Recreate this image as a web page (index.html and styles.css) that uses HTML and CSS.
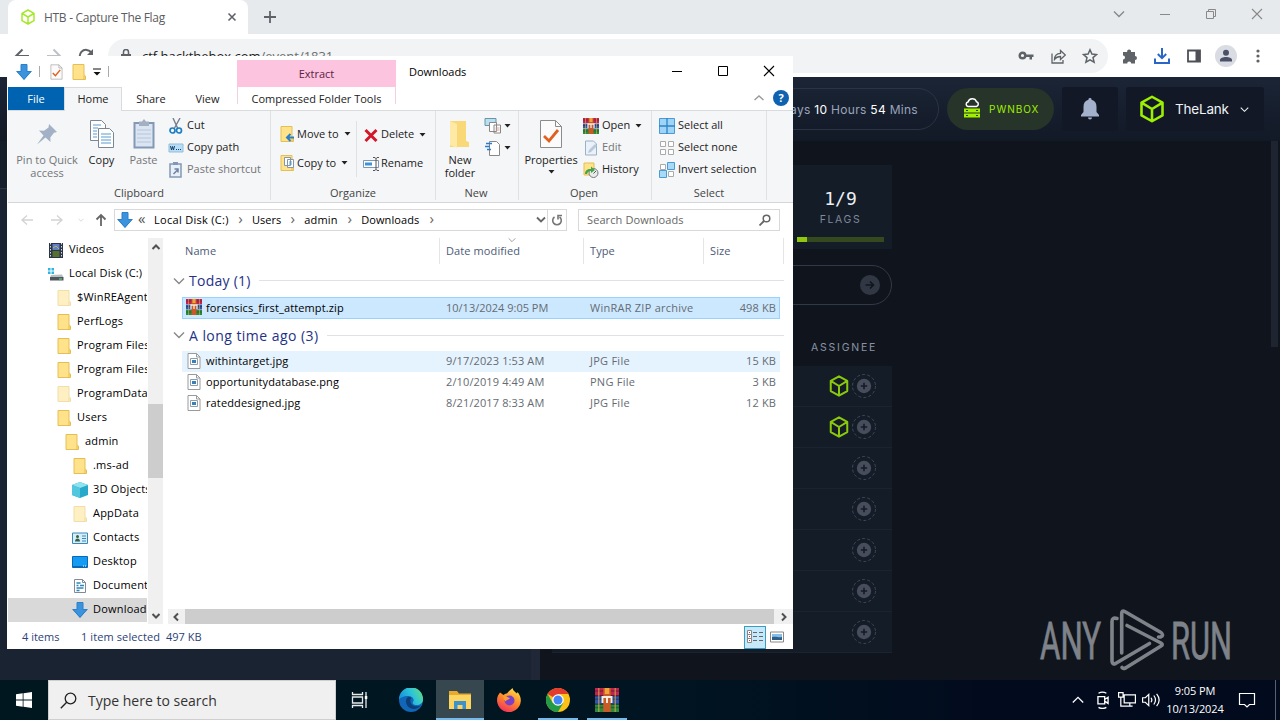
FILE: index.html
```html
<!DOCTYPE html>
<html lang="en">
<head>
  <meta charset="UTF-8" />
  <meta name="viewport" content="width=device-width, initial-scale=1.0"/>
  <title>HTB - Capture The Flag</title>
  <link rel="stylesheet" href="styles.css">
</head>
<body>

<!-- shared icons -->
<svg class="defs">
  <symbol id="cube" viewBox="0 0 24 24"><path d="M12 1.500 21 6.500v11L12 22.500 3 17.500v-11zM3 6.500l9 5.500 9-5.500M12 12v10" fill="none" stroke="currentColor" stroke-width="2.200" stroke-linejoin="round"/></symbol>
  <symbol id="down" viewBox="0 0 16 16"><path d="M5 0h6v7h5l-8 9-8-9h5z" fill="#3a93dc"/><path d="M5 .5h6v7h4L8 15.300 1 7.500h4z" fill="none" stroke="#2c7fc9"/></symbol>
  <symbol id="folder" viewBox="0 0 16 16"><path d="M2 .5h11V11l1.500 1v3.500H2z" fill="#ffe28a" stroke="#e5bf55"/><path d="M12 2v9l2 1v3h-2z" fill="#f3cf68"/></symbol>
  <symbol id="check" viewBox="0 0 24 30"><path d="M1.500 1.500h15l6 6v21h-21z" fill="#fbfbfb" stroke="#8c8c8c"/><path d="M16.500 1.500v6h6" fill="none" stroke="#8c8c8c"/><path d="m5 17 5 5 9-11" fill="none" stroke="#e2601f" stroke-width="2.800"/></symbol>
  <symbol id="rar" viewBox="0 0 16 16"><path fill="#c3224b" d="M0 0h16v5H0z"/><path fill="#3354a5" d="M0 5.500h16v5H0z"/><path fill="#2c8b3a" d="M0 11h16v5H0z"/><path d="M0 2h16M0 7.500h16M0 13h16" stroke="#222" stroke-opacity=".4"/><path d="M2.500 0v16M13.500 0v16" stroke="#d8b05c" stroke-opacity=".6"/><path fill="#c85a25" d="M5.500 0h5v16h-5z"/><path fill="#f0a43b" d="M6.500 0h3v4h-3z"/><path d="M5 10V6h6v4M8 6v4" fill="none" stroke="#f5ece0" stroke-width="1.300"/></symbol>
  <symbol id="pic" viewBox="0 0 14 16"><path d="M1 .5h8.500L13 4v11.500H1z" fill="#fff" stroke="#9a9a9a"/><path d="M9.500.5V4H13" fill="none" stroke="#9a9a9a"/><path d="M3.500 5.500h7v6h-7z" fill="#fff" stroke="#8aa0b0"/><path fill="#3c7fb5" d="M5 7h4v3H5z"/></symbol>
  <symbol id="caret" viewBox="0 0 7 4"><path d="M.5 0h6l-3 3.500z" fill="#222"/></symbol>
  <symbol id="chev" viewBox="0 0 12 12"><path d="m1 3.500 5 5 5-5" fill="none" stroke="currentColor" stroke-width="1.400"/></symbol>
  <symbol id="page" viewBox="0 0 16 16"><path d="M2.500 1.500h8l3 3v10h-11z" fill="#fff" stroke="#7f8c98"/><path d="M10.500 1.500v3h3" fill="none" stroke="#7f8c98"/></symbol>
  <symbol id="plus" viewBox="0 0 24 24"><circle cx="12" cy="12" r="11.500" fill="none" stroke="#454d5c" stroke-dasharray="3 2.200" stroke-width=".9"/><circle cx="12" cy="12" r="7.200" fill="#474d5b"/><path d="M12 8.800v6.400M8.800 12h6.400" stroke="#151b27" stroke-width="1.600"/></symbol>
</svg>

<div class="browser">
  <div class="tabstrip">
    <div class="tab">
      <svg class="fav"><use href="#cube"/></svg>
      <span>HTB - Capture The Flag</span>
      <svg class="tab-x" viewBox="0 0 10 10"><path d="m1.500 1.500 7 7m0-7-7 7" stroke="#5f6368" stroke-width="1.600"/></svg>
    </div>
    <svg class="newtab" viewBox="0 0 12 12"><path d="M6 0v12M0 6h12" stroke="#5f6368" stroke-width="1.800"/></svg>
    <div class="win-btns">
      <svg viewBox="0 0 12 12"><use href="#chev"/></svg>
      <svg viewBox="0 0 12 12"><path d="M1 6.500h10" stroke="#888"/></svg>
      <svg viewBox="0 0 12 12"><path d="M1.500 3.500h7v7h-7zM3.500 3.500v-2h7v7h-2" fill="none" stroke="#888"/></svg>
      <svg viewBox="0 0 12 12"><path d="m1 1 10 10m0-10L1 11" stroke="#888" stroke-width="1.100"/></svg>
    </div>
  </div>
  <div class="toolbar">
    <svg class="nav-ic" viewBox="0 0 16 16"><path d="M15 8H2m6.500-6.500L2 8l6.500 6.500" fill="none" stroke="#5f6368" stroke-width="2"/></svg>
    <svg class="nav-ic" viewBox="0 0 16 16"><path d="M1 8h13M7.500 1.500 14 8l-6.500 6.500" fill="none" stroke="#bdc1c6" stroke-width="2"/></svg>
    <svg class="nav-ic" viewBox="0 0 16 16"><path d="M13.500 5A6.300 6.300 0 1 0 14.300 9" fill="none" stroke="#5f6368" stroke-width="2"/><path d="M15 1v6H9z" fill="#5f6368"/></svg>
    <div class="omnibox">
      <svg class="lock" viewBox="0 0 10 14"><path fill="#5f6368" d="M0 5h10v8H0z"/><path d="M2.500 5V3a2.500 2.500 0 0 1 5 0v2" fill="none" stroke="#5f6368" stroke-width="1.500"/></svg>
      <span class="url">ctf.hackthebox.com<i>/event/1831</i></span>
      <svg class="ob-ic" viewBox="0 0 16 16"><circle cx="4.500" cy="7.500" r="2.800" fill="none" stroke="#5f6368" stroke-width="2.400"/><path d="M7 6.500h8.500V9H14v2.500h-2.500V9H7z" fill="#5f6368"/></svg>
      <svg class="ob-ic" viewBox="0 0 16 16"><path d="M2 5.500v9.500h11v-3M4.500 11.500c0-4 2.500-6 6-6.200V2.500L15.300 7l-4.800 4.500v-3c-2.500 0-4.500.8-6 3z" fill="none" stroke="#5f6368" stroke-width="1.300"/></svg>
      <svg class="ob-ic" viewBox="0 0 16 16"><path d="m8 1.800 1.900 4.300 4.600.4-3.500 3.100 1.100 4.600L8 11.800l-4.100 2.400L5 9.600 1.500 6.500l4.600-.4z" fill="none" stroke="#5f6368" stroke-width="1.500"/></svg>
    </div>
    <div class="ext">
      <svg viewBox="0 0 16 16"><path fill="#5f6368" d="M1 4h4.200a2 2 0 1 1 3.800 0h4v4a2 2 0 1 1 0 4v3.500H9.200a2 2 0 0 0-4 0H1v-4a2 2 0 0 0 0-4z"/></svg>
      <svg viewBox="0 0 16 16"><path d="M8 0v10M3.800 6 8 10.200 12.200 6M1 10.500V15h14v-4.500" fill="none" stroke="#2a66c8" stroke-width="2"/></svg>
      <svg viewBox="0 0 16 16"><path d="M2 2.500h12v11H2z" fill="none" stroke="#4d5156" stroke-width="1.800"/><path fill="#4d5156" d="M9.500 2H14v12H9.500z"/></svg>
      <svg class="face" viewBox="0 0 22 22"><circle cx="11" cy="11" r="11" fill="#dadce3"/><circle cx="11" cy="7.700" r="3" fill="#4a5068"/><path d="M5 16.500v-1.500c0-4 12-4 12 0v1.500z" fill="#4a5068"/></svg>
      <svg viewBox="0 0 16 16"><g fill="#5f6368"><circle cx="8" cy="3" r="1.600"/><circle cx="8" cy="8" r="1.600"/><circle cx="8" cy="13" r="1.600"/></g></svg>
    </div>
  </div>

  <div class="page">
    <header class="htb-head">
      <div class="timer">Days <b>10</b> Hours <b>54</b> Mins</div>
      <div class="pwnbox">
        <svg viewBox="0 0 18 20"><path d="M5 8.500h8.500a2.500 2.500 0 0 0 0-4.800 4.500 4.500 0 0 0-8.500.3 2.300 2.300 0 0 0 0 4.500z" fill="none" stroke="#fff" stroke-width="1.500"/><path d="M1 10.500h16v4H1zM1 15.500h16v4H1z" fill="#9fef00"/><path d="M3 12.500h2m8 0h2M3 17.500h2m8 0h2" stroke="#2b3a2d"/></svg>
        <span>PWNBOX</span>
      </div>
      <div class="bell"><svg viewBox="0 0 18 22"><path d="M9 0a1.500 1.500 0 0 1 1.500 1.700C14 2.500 15.500 5 15.500 9v5l2.500 3v1.500H0V17l2.500-3V9c0-4 1.500-6.500 5-7.300A1.500 1.500 0 0 1 9 0zM7 19.500h4a2 2 0 0 1-4 0z" fill="#a4b1cd"/></svg></div>
      <div class="user"><svg class="lg"><use href="#cube"/></svg><span>TheLank</span><svg class="sm"><use href="#chev"/></svg></div>
    </header>
    <div class="htb-body">
      <aside class="chat"><div class="chat-top"></div></aside>
      <section class="event">
        <div class="flags">
          <strong>1/9</strong>
          <small>FLAGS</small>
          <div class="progress"><div style="width:11%"></div></div>
        </div>
        <div class="flag-input"><svg viewBox="0 0 20 20"><circle cx="10" cy="10" r="10" fill="#313844"/><path d="M5.500 10h8M10 6.500l3.500 3.500-3.500 3.500" fill="none" stroke="#10151e" stroke-width="1.700"/></svg></div>
        <div class="assignee">ASSIGNEE</div>
        <div class="tasks">
          <div><svg class="own"><use href="#cube"/></svg><svg><use href="#plus"/></svg></div>
          <div><svg class="own"><use href="#cube"/></svg><svg><use href="#plus"/></svg></div>
          <div><svg><use href="#plus"/></svg></div>
          <div><svg><use href="#plus"/></svg></div>
          <div><svg><use href="#plus"/></svg></div>
          <div><svg><use href="#plus"/></svg></div>
          <div><svg><use href="#plus"/></svg></div>
        </div>
      </section>
      <div class="page-scroll"></div>
    </div>
  </div>
</div>

<svg class="watermark" viewBox="0 0 200 66">
  <text x="4" y="53" textLength="61" lengthAdjust="spacingAndGlyphs">ANY</text>
  <text x="135" y="53" textLength="61" lengthAdjust="spacingAndGlyphs">RUN</text>
  <g fill="none" stroke="#7e8289" stroke-width="3.600" stroke-linejoin="round" stroke-linecap="round">
    <path d="M85.700 47V7.500q0-3.500 3-2L125 26.500q3.500 3-.5 4.500h-2"/>
    <path d="M91 19.500 125 37q2.500 1.500 0 3L89.500 62q-2.500 1-3.500-.5"/>
    <path d="M81 12.500q-5-1.500-5 3V55q0 4 3.500 2.500l34-20"/>
  </g>
</svg>

<div class="explorer">
  <div class="titlebar">
    <div class="quick">
      <svg class="i16"><use href="#down"/></svg><i class="bar"></i>
      <svg class="q-doc"><use href="#check"/></svg>
      <svg class="i16 q-fold"><use href="#folder"/></svg>
      <svg class="q-car" viewBox="0 0 8 8"><path d="M0 1h8" stroke="#111"/><path d="M.5 4h7L4 7.500z" fill="#111"/></svg><i class="bar"></i>
    </div>
    <div class="extract">Extract</div>
    <div class="title">Downloads</div>
    <div class="sys">
      <svg viewBox="0 0 12 12"><path d="M1 6.500h10" stroke="#000"/></svg>
      <svg viewBox="0 0 12 12"><path d="M1.500 1.500h9v9h-9z" fill="none" stroke="#000"/></svg>
      <svg viewBox="0 0 12 12"><path d="m1 1 10 10m0-10L1 11" stroke="#000" stroke-width="1.100"/></svg>
    </div>
  </div>

  <div class="tabs">
    <div class="t-file">File</div>
    <div class="t-home">Home</div>
    <div class="t-share">Share</div>
    <div class="t-view">View</div>
    <div class="t-comp">Compressed Folder Tools</div>
    <svg class="up-car" viewBox="0 0 12 12"><path d="m1.500 8 4.500-4L10.500 8" fill="none" stroke="#999" stroke-width="1.400"/></svg>
    <div class="help">?</div>
  </div>

  <div class="ribbon">
    <div class="group g-clip">
      <div class="row">
        <div class="big dim pin"><svg viewBox="0 0 24 24"><path d="m14 2 8 8-3 .8-3.700 4.700.2 4.500-5-4.500L2 22.500 8.500 13.500 4 8.500l5 .3 4.500-3.300z" fill="#a3b1c6"/></svg><span>Pin to Quick<br>access</span></div>
        <div class="big copy"><svg viewBox="0 0 26 30"><g fill="#fff" stroke="#7b8894"><path d="M1.500 1.500h11l4 4v16h-15z"/><path d="M9.500 9.500h11l4 4v15h-15z"/></g><path d="M4 6h8M4 9h5M4 12h4M4 15h4M4 18h4M12 15h10M12 18h10M12 21h10M12 24h10" stroke="#5b9bd0" stroke-width="1.200"/></svg><span>Copy</span></div>
        <div class="big dim paste"><svg viewBox="0 0 22 30"><path d="M1.500 4h19v24.500h-19z" fill="#dbe5f2" stroke="#8298b5" stroke-width="2"/><path d="M6 2.500h3L11 0l2 2.500h3V7H6z" fill="#a3b0c2"/><path d="M4 11h14M4 15h14M4 19h14M4 23h14" stroke="#b4c5da"/></svg><span>Paste</span></div>
        <div class="smalls">
          <div><svg viewBox="0 0 16 16"><path d="m5 0 5 11M12 0 6 11" stroke="#75808c" stroke-width="1.400"/><g fill="none" stroke="#1c7ec4" stroke-width="1.700"><circle cx="4.500" cy="12.500" r="2.500"/><circle cx="11" cy="12.500" r="2.500"/></g></svg>Cut</div>
          <div><svg viewBox="0 0 16 16"><path d="M1 4h14v8H1z" fill="#b8def7" stroke="#8fbddb"/><path d="m2.500 6 1 4 1-3.500 1 3.500 1-4" fill="none" stroke="#174066" stroke-width="1"/><path d="M8 9.500h6" stroke="#174066" stroke-dasharray="1 1" stroke-width="1.200"/></svg>Copy path</div>
          <div class="dim"><svg viewBox="0 0 16 16"><path d="M2 2h11v13H2z" fill="#e8eff7" stroke="#8298b5" stroke-width="1.500"/><path d="M5 0h5v3H5z" fill="#8298b5"/><path d="M5.500 12 10 7.500M6.500 7H10v3.500" fill="none" stroke="#6c83a3" stroke-width="1.500"/></svg>Paste shortcut</div>
        </div>
      </div>
      <div class="label">Clipboard</div>
    </div>
    <div class="group g-org">
      <div class="row">
        <div class="mids">
          <div><svg viewBox="0 0 16 16"><use href="#folder"/><path d="M15 11.500H9M11.500 8 8 11.500l3.500 3.500" fill="none" stroke="#2d7dc8" stroke-width="2"/></svg>Move to<svg class="car"><use href="#caret"/></svg></div>
          <div><svg viewBox="0 0 16 16"><use href="#folder"/><path d="M5.500 2.500h6v8h-6zM8.500 4.500h6v8h-6z" fill="#fff" stroke="#8296ad"/><path d="M10 7h3M10 9h3" stroke="#5b9bd0"/></svg>Copy to<svg class="car"><use href="#caret"/></svg></div>
        </div>
        <div class="mids second">
          <div><svg viewBox="0 0 16 16"><path d="m2.500 3 11 11m0-11-11 11" stroke="#d3172a" stroke-width="3"/></svg>Delete<svg class="car"><use href="#caret"/></svg></div>
          <div><svg viewBox="0 0 16 16"><path d="M.5 4.500h15v7H.5z" fill="#fff" stroke="#7d98b3"/><path fill="#3e92d8" d="M2 6.500h7v3H2z"/><path d="M10 1.500h2l1 1 1-1h2M13 2v12m-3 .5h2l1-1 1 1h2" fill="none" stroke="#555"/></svg>Rename</div>
        </div>
      </div>
      <div class="label">Organize</div>
    </div>
    <div class="group g-new">
      <div class="row">
        <div class="big newf"><svg viewBox="0 0 24 30"><path d="M2 2h16v20l3 1v5H2z" fill="#f8d877"/><path d="M2 2l7 3v24l-7-3z" fill="#ffe9a6"/></svg><span>New<br>folder</span></div>
        <div class="pair">
          <div><svg viewBox="0 0 18 18"><path d="M1 1.500h11v7H1z" fill="#b9e0f0" stroke="#6a94a8"/><path d="M5.500 5.500h7v9h-7zM10 8h6.500v8H10z" fill="#fff" stroke="#888"/><path d="M11.500 11h4M11.500 13h4" stroke="#d0a090"/></svg><svg class="car"><use href="#caret"/></svg></div>
          <div><svg viewBox="0 0 18 18"><path d="M5.500 2.500h7l3 3v11h-10z" fill="#fff" stroke="#888"/><path d="M2 4.500h6M1 7.500h5M3 10.500h4" stroke="#2d7dc8" stroke-width="1.300"/></svg><svg class="car"><use href="#caret"/></svg></div>
        </div>
      </div>
      <div class="label">New</div>
    </div>
    <div class="group g-open">
      <div class="row">
        <div class="big props"><svg><use href="#check"/></svg><span>Properties</span><svg class="car"><use href="#caret"/></svg></div>
        <div class="smalls">
          <div><svg><use href="#rar"/></svg>Open<svg class="car"><use href="#caret"/></svg></div>
          <div class="dim"><svg viewBox="0 0 16 16"><path d="M2.500 1h8l3 3v11h-11z" fill="#eaf1f8" stroke="#9cb0c8"/><path d="m5 13 1-3 6-6 2 2-6 6z" fill="#b9c8da"/></svg>Edit</div>
          <div><svg viewBox="0 0 16 16"><path d="M1 1h10v12H1z" fill="#ffe28a" stroke="#e5bf55"/><circle cx="10.500" cy="11" r="4.500" fill="#e8eceb" stroke="#777"/><path d="M2 12c0-4 3-5.500 6-5V4.500L12 8l-4 3V9c-2 0-3.500 1-4 3z" fill="#42a547"/><path d="M10.500 11.500 13 9" stroke="#555"/></svg>History</div>
        </div>
      </div>
      <div class="label">Open</div>
    </div>
    <div class="group g-sel">
      <div class="row">
        <div class="smalls">
          <div><svg viewBox="0 0 16 16"><path d="M.5.5h15v15H.5z" fill="#9fd4f7" stroke="#4a9bd4"/><path d="M8 0v16M0 8h16" stroke="#2c84c8" stroke-width="1.300"/></svg>Select all</div>
          <div><svg viewBox="0 0 16 16"><path d="M1.500 1.500h5v5h-5zM9.500 1.500h5v5h-5zM1.500 9.500h5v5h-5zM9.500 9.500h5v5h-5z" fill="#fff" stroke="#aaa"/></svg>Select none</div>
          <div><svg viewBox="0 0 16 16"><path d="M1.500 2.500h5v5h-5zM9.500 9.500h5v5h-5z" fill="#fff" stroke="#aaa"/><path d="M8.500.5h7v7h-7zM.5 8.500h7v7h-7z" fill="#a8daf8" stroke="#4a9bd4"/></svg>Invert selection</div>
        </div>
      </div>
      <div class="label">Select</div>
    </div>
  </div>

  <div class="address">
    <svg class="a1" viewBox="0 0 14 14"><path d="M13 7H2m5-4.500L2 7l5 4.500" fill="none" stroke="#d3d3d3" stroke-width="1.300"/></svg>
    <svg class="a2" viewBox="0 0 14 14"><path d="M1 7h11M7 2.500 12 7l-5 4.500" fill="none" stroke="#d3d3d3" stroke-width="1.300"/></svg>
    <svg class="a3" viewBox="0 0 12 12"><use href="#chev"/></svg>
    <svg class="a4" viewBox="0 0 14 14"><path d="M7 13V2M2.500 6.500 7 2l4.500 4.500" fill="none" stroke="#666" stroke-width="1.800"/></svg>
    <div class="path">
      <svg class="i16"><use href="#down"/></svg>
      <span class="laq">«</span>
      <span class="c1">Local Disk (C:)</span><em>›</em><span>Users</span><em>›</em><span class="c3">admin</span><em>›</em><span class="c4">Downloads</span><em>›</em>
      <svg class="drop" viewBox="0 0 12 12"><path d="m2 3.500 4 4 4-4" fill="none" stroke="#666" stroke-width="1.800"/></svg>
      <div class="refresh"><svg viewBox="0 0 12 12"><path d="M3.500 3A4.300 4.300 0 1 0 8.500 3" fill="none" stroke="#777" stroke-width="1.600"/><path d="M7 5.500V1.500h4" fill="none" stroke="#777" stroke-width="1.600"/></svg></div>
    </div>
    <div class="search"><span>Search Downloads</span><svg viewBox="0 0 12 12"><circle cx="7.500" cy="4.500" r="3.300" fill="none" stroke="#666" stroke-width="1.500"/><path d="M5 7 .5 11.500" stroke="#666" stroke-width="1.800"/></svg></div>
  </div>

  <div class="main">
    <nav class="tree">
      <div class="l1"><svg viewBox="0 0 16 16"><path fill="#2a3648" d="M1 1h14v15H1z"/><path d="M2.500 1v15M13.500 1v15" stroke="#d5dbe2" stroke-dasharray="1.500 1.500"/><path fill="#5f7fc9" d="M4.500 2h7v6h-7z"/><path fill="#55702f" d="M4.500 9h7v6h-7z"/><path d="m5 6 3-2 3 3" stroke="#c2b05f" fill="none"/></svg>Videos</div>
      <div class="l1"><svg viewBox="0 0 16 16"><path d="M0 2h2.500v2.500H0zM3.500 2H6v2.500H3.500zM0 5.500h2.500V8H0zM3.500 5.500H6V8H3.500z" fill="#2bb5e0"/><path d="m3 9 11-.5 1.500 3H2z" fill="#b7bdc2"/><path fill="#4d575e" d="M2 11h13.500v3.500H2z"/><path d="M11 13h3" stroke="#6fe08a"/></svg>Local Disk (C:)</div>
      <div class="l2"><svg class="pale"><use href="#folder"/></svg>$WinREAgent</div>
      <div class="l2"><svg><use href="#folder"/></svg>PerfLogs</div>
      <div class="l2"><svg><use href="#folder"/></svg>Program Files</div>
      <div class="l2"><svg><use href="#folder"/></svg>Program Files</div>
      <div class="l2"><svg class="pale"><use href="#folder"/></svg>ProgramData</div>
      <div class="l2"><svg><use href="#folder"/></svg>Users</div>
      <div class="l3"><svg><use href="#folder"/></svg>admin</div>
      <div class="l4"><svg><use href="#folder"/></svg>.ms-ad</div>
      <div class="l4"><svg viewBox="0 0 16 16"><path d="m8 0 8 3v10l-8 3-8-3V3z" fill="#27a9c9"/><path d="m0 3 8-3 8 3-8 3z" fill="#8fe2f0"/><path d="M8 6v10l-8-3V3z" fill="#52c7de"/></svg>3D Objects</div>
      <div class="l4"><svg class="pale"><use href="#folder"/></svg>AppData</div>
      <div class="l4"><svg viewBox="0 0 16 16"><path d="M.5 3h15v10.500H.5z" fill="#d4effb" stroke="#3e86b4"/><circle cx="5.500" cy="6.500" r="1.500" fill="#3a5f40"/><path fill="#3a5f40" d="M3 11.500c0-4 5-4 5 0z"/><path d="M10 6h4M10 8.500h4M10 11h4" stroke="#3e86b4"/></svg>Contacts</div>
      <div class="l4"><svg viewBox="0 0 16 16"><path d="M.5 2.500h15v11H.5z" fill="#169bf4" stroke="#0a69b4"/><path d="M1 12.500h14" stroke="#0a69b4"/><path d="M11 12h3" stroke="#fff" stroke-dasharray="1 1"/></svg>Desktop</div>
      <div class="l4"><svg viewBox="0 0 16 16"><use href="#page"/><path d="M4.500 5h4M4.500 7.500h2M8 7.500h4M4.500 10h7M4.500 12.500h3" stroke="#2d86b8" stroke-width="1.300"/></svg>Documents</div>
      <div class="l4 sel"><svg><use href="#down"/></svg>Downloads</div>
    </nav>
    <div class="vscroll">
      <svg viewBox="0 0 12 12"><path d="m2.500 8 3.500-3.500L9.500 8" fill="none" stroke="#505050" stroke-width="2"/></svg>
      <div class="vthumb"></div>
      <svg class="dn" viewBox="0 0 12 12"><path d="M2.500 4 6 7.500 9.500 4" fill="none" stroke="#505050" stroke-width="2"/></svg>
    </div>
    <div class="files">
      <div class="cols">
        <div class="name">Name</div>
        <div class="date">Date modified<svg><use href="#chev"/></svg></div>
        <div class="type">Type</div>
        <div class="size">Size</div>
      </div>
      <div class="ghead first"><svg><use href="#chev"/></svg><span>Today (1)</span><hr></div>
      <div class="file selected"><svg><use href="#rar"/></svg><span class="name">forensics_first_attempt.zip</span><span class="date">10/13/2024 9:05 PM</span><span class="type">WinRAR ZIP archive</span><span class="size">498 KB</span></div>
      <div class="ghead long"><svg><use href="#chev"/></svg><span>A long time ago (3)</span><hr></div>
      <div class="file hover"><svg><use href="#pic"/></svg><span class="name">withintarget.jpg</span><span class="date">9/17/2023 1:53 AM</span><span class="type">JPG File</span><span class="size">15 KB</span></div>
      <div class="file"><svg><use href="#pic"/></svg><span class="name">opportunitydatabase.png</span><span class="date">2/10/2019 4:49 AM</span><span class="type">PNG File</span><span class="size">3 KB</span></div>
      <div class="file"><svg><use href="#pic"/></svg><span class="name">rateddesigned.jpg</span><span class="date">8/21/2017 8:33 AM</span><span class="type">JPG File</span><span class="size">12 KB</span></div>
      <div class="hscroll">
        <svg viewBox="0 0 12 12"><path d="M8 2.500 4.500 6 8 9.500" fill="none" stroke="#505050" stroke-width="2"/></svg>
        <div class="hthumb"></div>
        <svg viewBox="0 0 12 12"><path d="M4 2.500 7.500 6 4 9.500" fill="none" stroke="#505050" stroke-width="2"/></svg>
      </div>
    </div>
  </div>

  <div class="status">
    <span class="s1">4 items</span><span class="s2">1 item selected</span><span class="s3">497 KB</span>
    <div class="view on"><svg viewBox="0 0 18 16"><path d="M1.500 1.500h4v4h-4zM1.500 5.500h4v4h-4zM1.500 9.500h4v4h-4z" fill="#fff" stroke="#888"/><path d="M3 3.500h1M3 7.500h1M3 11.500h1" stroke="#c33"/><path d="M7 3.500h4m2 0h4M7 7.500h4m2 0h4M7 11.500h4m2 0h4" stroke="#666"/></svg></div>
    <div class="view"><svg viewBox="0 0 14 12"><path d="M.5 1h13v10H.5z" fill="#fff" stroke="#888"/><path fill="#85bfe8" d="M2 3h10v6H2z"/><path d="m2 9 0-3c5-1 6 1 10 0v3z" fill="#2d5f88"/></svg></div>
  </div>
</div>

<div class="taskbar">
  <div class="start"><svg viewBox="0 0 16 16"><path d="m0 2.300 6.700-1v6.300H0zM7.500 1.200 16 0v7.600H7.500zM0 8.400h6.700v6.300l-6.700-1zM7.500 8.400H16V16l-8.500-1.200z" fill="#fff"/></svg></div>
  <div class="tsearch"><svg viewBox="0 0 17 17"><circle cx="10.500" cy="6.500" r="5.300" fill="none" stroke="#222" stroke-width="1.300"/><path d="M6.700 10.300.8 16.300" stroke="#222" stroke-width="1.400"/></svg><span>Type here to search</span></div>
  <div class="app view-ic"><svg viewBox="0 0 18 18"><path d="M1.500 1v2.500h10V1M1.500 17v-2.500h10V17M1.500 6h10v6h-10zM15 1v16" fill="none" stroke="#e6eaec" stroke-width="1.300"/><path fill="#fff" d="M13.800 5h2.500v3h-2.500z"/></svg></div>
  <div class="app edge"><svg viewBox="0 0 24 24">
    <defs><linearGradient id="eg" x1="0" x2="1" y1=".4" y2="0"><stop offset="0" stop-color="#1695dd"/><stop offset=".5" stop-color="#2fc5d8"/><stop offset="1" stop-color="#6bdf6c"/></linearGradient></defs>
    <circle cx="12" cy="12" r="12" fill="#1166b8"/><path d="M0 11.500A12 12 0 0 1 24 11c.3 4-3 6-6 6-3.500 0-5-1.500-4-3 2-3-1-6-5-6-4.500 0-8 2-9 3.500z" fill="url(#eg)"/><path d="M9 9c-4 3-2 11 5 12 3 .3 6-1 8-3.500-3 1.500-9 1.500-10.500-3.500-.5-2 0-3 1-4-1-1-2.500-1.300-3.500-1z" fill="#0c3f78"/></svg></div>
  <div class="app active"><svg viewBox="0 0 24 24"><path fill="#e8a92c" d="M1 3h8l2 2.500h12V9H1z"/><path fill="#fcd462" d="M1 7h22v14H1z"/><path d="M6 21v-8h12v8h-3.500v-4h-5v4z" fill="#3c92cc"/></svg></div>
  <div class="app"><svg viewBox="0 0 24 24">
    <defs><linearGradient id="fg" x1=".8" x2=".3" y1="0" y2="1"><stop offset="0" stop-color="#ffe34a"/><stop offset=".5" stop-color="#ff8a2a"/><stop offset="1" stop-color="#f0305c"/></linearGradient></defs>
    <path d="M3 4.500 6.500 7C8 5.500 9 5.500 10 5.500 11.500 3 14 2 15.500 0c.5 3 3 4 4.500 5.500l.5-1.500C23 7 24 10 23.800 13A11.900 11.900 0 1 1 1 7.500z" fill="url(#fg)"/><circle cx="12.500" cy="12.500" r="5" fill="#7c40c8"/><path d="M6.500 8c3 0 4 1.500 6.500 2-1 2-4 1.500-4 3.500-2-1-3-3-2.500-5.500z" fill="#ff9e2e"/></svg></div>
  <div class="app run"><svg viewBox="0 0 24 24"><circle cx="12" cy="12" r="12" fill="#fbc116"/><path d="M12 12 1.600 6A12 12 0 0 1 22.400 6H12z" fill="#e33b2e"/><path d="M1.600 6A12 12 0 0 0 12 24l5.200-9L12 12 6.800 15z" fill="#229a47"/><circle cx="12" cy="12" r="5.800" fill="#fff"/><circle cx="12" cy="12" r="4.500" fill="#4285f4"/></svg></div>
  <div class="app run"><svg><use href="#rar"/></svg></div>
  <div class="tray">
    <svg class="t1" viewBox="0 0 12 12"><path d="M.8 8.500 6 3.300l5.200 5.200" fill="none" stroke="#fff" stroke-width="1.300"/></svg>
    <svg viewBox="0 0 16 16"><path d="M3.500 5h6v6.500h-6zM9.500 7.500l3-2v5.500l-3-2M4 2q3.500-2 7 0M4 14.500q3.500 2 7 0" fill="none" stroke="#fff" stroke-width="1.200"/></svg>
    <svg viewBox="0 0 16 16"><path d="M5.500 3.500h10v7h-10zM7 13.500h6M10.500 10.500v3M2.500 6v7.500H7M.5 1.500h4v4h-4z" fill="none" stroke="#fff" stroke-width="1.100"/></svg>
    <svg viewBox="0 0 16 16"><path d="M.5 6v4h2.500L6 13V3L3 6zM8 6q1.500 2 0 4M10.500 4q3 4 0 8M13 2.500q4.500 5.500 0 11" fill="none" stroke="#fff" stroke-width="1.100"/></svg>
    <div class="clock">9:05 PM<br>10/13/2024</div>
    <svg class="note" viewBox="0 0 18 18"><path d="M1.500 2.500h15v11h-5l-2.500 2.500-2.500-2.500h-5z" fill="none" stroke="#fff" stroke-width="1.200"/></svg>
    <i></i>
  </div>
</div>

</body>
</html>
```

FILE: styles.css
```css
:root {
  --green: #9fef00;
  --page-bg: #10151d;
  --panel: #141c28;
  --navy: #1a2332;
}

* {
  margin: 0;
  padding: 0;
  box-sizing: border-box;
}

body {
  width: 1280px;
  height: 720px;
  overflow: hidden;
  position: relative;
  font-family: 'Open Sans', 'Noto Sans', sans-serif;
  font-size: 11px;
  color: #222;
  background: var(--page-bg);
}

svg {
  display: block;
  flex-shrink: 0;
}

i {
  font-style: normal;
}

.defs {
  position: absolute;
  width: 0;
  height: 0;
}

.i16 {
  width: 16px;
  height: 16px;
}

.car {
  width: 7px !important;
  height: 4px !important;
}

/* browser */
.browser {
  height: 680px;
  display: flex;
  flex-direction: column;
}

.tabstrip {
  height: 34px;
  background: #e7eaed;
  display: flex;
  align-items: center;
  padding-left: 8px;
}

.tab {
  width: 240px;
  height: 34px;
  background: #fff;
  border-radius: 8px 8px 0 0;
  display: flex;
  align-items: center;
  padding: 0 11px 0 12px;
  font-size: 12px;
  letter-spacing: -0.3px;
  color: #5a5d61;
}

.fav {
  width: 16px;
  height: 16px;
  color: #a4e82a;
  margin-right: 8px;
}

.tab-x {
  width: 10px;
  height: 10px;
  margin-left: auto;
}

.newtab {
  width: 12px;
  height: 12px;
  margin-left: 16px;
}

.win-btns {
  margin-left: auto;
  display: flex;
  gap: 34px;
  padding: 0 17px 6px 0;
  color: #888;
}

.win-btns svg {
  width: 12px;
  height: 12px;
}

.toolbar {
  height: 43px;
  background: #fff;
  display: flex;
  align-items: center;
  padding-left: 14px;
}

.nav-ic {
  width: 16px;
  height: 16px;
  margin-right: 16px;
}

.nav-ic:nth-child(3) {
  margin-right: 14px;
}

.omnibox {
  width: 1000px;
  height: 34px;
  border-radius: 17px;
  background: #f1f3f4;
  display: flex;
  align-items: center;
  padding: 0 10px 0 13px;
}

.lock {
  width: 10px;
  height: 14px;
}

.url {
  margin: 0 auto 0 11px;
  font-size: 13px;
  line-height: 18px;
  letter-spacing: -0.02px;
  color: #222;
}

.url i {
  color: #6a6d70;
}

.ob-ic {
  width: 16px;
  height: 16px;
  margin-left: 16px;
}

.ext {
  display: flex;
  align-items: center;
  gap: 16px;
  margin-left: 14px;
}

.ext svg {
  width: 16px;
  height: 16px;
}

.ext .face {
  width: 22px;
  height: 22px;
  margin: 0 -3px;
}

.page {
  flex: 1;
  display: flex;
  flex-direction: column;
}

.htb-head {
  height: 64px;
  background: linear-gradient(#1b2535, #121927);
  display: flex;
  align-items: center;
  justify-content: flex-end;
  padding-right: 16px;
  gap: 8px;
}

.timer {
  width: 240px;
  height: 42px;
  border: 1px solid #2b3444;
  border-radius: 21px;
  display: flex;
  align-items: center;
  justify-content: flex-end;
  padding-right: 20px;
  font: 12px 'Inter', sans-serif;
  letter-spacing: 0.3px;
  white-space: pre;
  color: #99a4ba;
}

.timer b {
  font-weight: 400;
  color: #fff;
}

.pwnbox {
  width: 107px;
  height: 42px;
  border-radius: 21px;
  background: #26342a;
  display: flex;
  align-items: center;
  padding-left: 16px;
  gap: 8px;
  font: 10px 'Inter', sans-serif;
  letter-spacing: 1px;
  color: var(--green);
}

.pwnbox svg {
  width: 18px;
  height: 20px;
  margin-top: -3px;
}

.bell,
.user {
  height: 44px;
  background: #121825;
  border-radius: 3px;
  display: flex;
  align-items: center;
}

.bell {
  width: 56px;
  justify-content: center;
}

.bell svg {
  width: 18px;
  height: 22px;
}

.user {
  width: 138px;
  padding-left: 12px;
  font: 13.5px 'Inter', sans-serif;
  letter-spacing: -0.2px;
  color: #f0f2f6;
}

.user .lg {
  width: 28px;
  height: 28px;
  color: var(--green);
  margin-right: 9px;
}

.user .sm {
  width: 9px;
  height: 9px;
  margin-left: 11px;
}

.htb-body {
  flex: 1;
  display: flex;
}

.chat {
  width: 540px;
  background: var(--navy);
  border-right: 9px solid #202838;
}

.chat-top {
  height: 48px;
  background: #151e2b;
  border-bottom: 1px solid #2b3545;
}

.event {
  width: 352px;
  padding-top: 24px;
  display: flex;
  flex-direction: column;
  align-items: flex-end;
}

.flags {
  width: 103px;
  height: 84px;
  background: var(--panel);
  display: flex;
  flex-direction: column;
  align-items: center;
  padding-top: 22px;
}

.flags strong {
  font: 18px/24px 'DejaVu Sans Mono', monospace;
  color: #eceff4;
}

.flags small {
  font: 10.5px/18px 'Inter', sans-serif;
  letter-spacing: 1.6px;
  color: #7f899b;
}

.progress {
  width: 87px;
  height: 5px;
  margin-top: 8px;
  background: #344a1e;
}

.progress div {
  height: 5px;
  background: #8fc80e;
}

.flag-input {
  width: 300px;
  height: 40px;
  margin-top: 16px;
  border: 1px solid #323946;
  border-radius: 20px;
  display: flex;
  align-items: center;
  justify-content: flex-end;
  padding-right: 11px;
}

.flag-input svg {
  width: 20px;
  height: 20px;
}

.assignee {
  height: 61px;
  padding: 35px 15px 0 0;
  font: 10.5px/16px 'Inter', sans-serif;
  letter-spacing: 1.75px;
  color: #8993a5;
}

.tasks {
  width: 340px;
  background: var(--panel);
}

.tasks > div {
  height: 41px;
  border-bottom: 1px solid #1b2330;
  display: flex;
  align-items: center;
  justify-content: flex-end;
  padding-right: 16px;
}

.tasks svg {
  width: 24px;
  height: 24px;
}

.tasks .own {
  width: 22px;
  height: 22px;
  color: #8ac90c;
  margin-right: 2px;
}

.page-scroll {
  width: 7px;
  height: 206px;
  margin: 0 2px 0 auto;
  background: #1e2530;
}

.watermark {
  position: absolute;
  left: 1036px;
  top: 606px;
  width: 200px;
  height: 66px;
}

.watermark text {
  font: 400 52px Roboto, sans-serif;
  fill: #7e8289;
  stroke: #7e8289;
  stroke-width: 0.8;
}

/* file explorer window */
.explorer {
  position: absolute;
  left: 7px;
  top: 56px;
  width: 786px;
  height: 593px;
  padding-left: 1px;
  background: #fff;
  display: flex;
  flex-direction: column;
}

.titlebar {
  height: 31px;
  display: flex;
}

.quick {
  width: 229px;
  padding-left: 8px;
  display: flex;
  align-items: center;
}

.bar {
  width: 1px;
  height: 11px;
  background: #aaa;
  margin: 0 10px 0 7px;
}

.q-doc {
  width: 13px;
  height: 16px;
  margin-right: 8px;
}

.q-fold {
  margin-right: 6px;
}

.q-car {
  width: 8px;
  height: 8px;
}

.extract {
  width: 159px;
  height: 27px;
  margin-top: 4px;
  background: #fcc4de;
  color: #5b2343;
  text-align: center;
  line-height: 28px;
}

.title {
  padding-left: 13px;
  line-height: 31px;
  color: #000;
}

.sys {
  margin-left: auto;
  padding: 0 18px 1px 0;
  display: flex;
  align-items: center;
  gap: 34px;
}

.sys svg {
  width: 12px;
  height: 12px;
}

.tabs {
  height: 23px;
  display: flex;
  line-height: 24px;
  text-align: center;
}

.t-file {
  width: 56px;
  background: #0063b1;
  color: #fff;
}

.t-home {
  width: 58px;
  height: 24px;
  background: #f5f6f7;
  border: 1px solid #dadbdc;
  border-bottom: none;
  line-height: 22px;
  position: relative;
}

.t-share {
  width: 58px;
}

.t-view {
  width: 57px;
  padding-right: 2px;
}

.t-comp {
  width: 159px;
  height: 17px;
  border: solid #f3cfe0;
  border-width: 0 1px;
}

.up-car {
  width: 12px;
  height: 12px;
  margin: 5px 8px 0 auto;
}

.help {
  width: 16px;
  height: 16px;
  margin: 3px 4px 0 0;
  border-radius: 50%;
  background: #0f62b0;
  color: #fff;
  font-weight: bold;
  line-height: 16px;
}

.ribbon {
  height: 93px;
  background: #f5f6f7;
  border-top: 1px solid #dadbdc;
  border-bottom: 1px solid #d5d6d7;
  display: flex;
}

.group {
  margin-bottom: 2px;
  border-right: 1px solid #e0e1e2;
  display: flex;
  flex-direction: column;
}

.g-clip { width: 263px; }
.g-org { width: 165px; }
.g-new { width: 83px; }
.g-open { width: 133px; }
.g-sel { width: 115px; }

.row {
  height: 75px;
  display: flex;
}

.label {
  text-align: center;
  line-height: 15px;
  color: #444;
}

.g-new .label,
.g-open .label {
  padding-right: 2px;
}

.big {
  display: flex;
  flex-direction: column;
  align-items: center;
  padding-top: 8px;
  text-align: center;
  line-height: 13px;
  white-space: nowrap;
}

.big svg {
  height: 30px;
  margin-bottom: 4px;
}

.dim {
  color: #737578;
}

.pin { width: 78px; }
.pin svg { width: 24px; height: 24px; margin: 3px 0 7px; }
.copy { width: 31px; }
.copy svg { width: 26px; }
.paste { width: 53px; }
.paste svg { width: 22px; }

.smalls {
  padding-top: 4px;
}

.smalls > div {
  height: 22px;
  display: flex;
  line-height: 20px;
  white-space: nowrap;
}

.smalls svg {
  width: 16px;
  height: 16px;
  margin: 3px 3px 0 0;
}

.smalls .car {
  margin: 9px 0 0 5px;
}

.g-clip .smalls {
  margin-left: -2px;
}

.mids {
  width: 86px;
  padding: 9px 0 0 8px;
}

.mids.second {
  width: 78px;
  height: 56px;
  margin-top: 10px;
  margin-left: -1px;
  padding: 0 0 0 6px;
  border-left: 1px solid #e0e1e2;
}

.mids > div {
  height: 29px;
  display: flex;
  line-height: 27px;
  white-space: nowrap;
}

.mids.second > div {
  line-height: 26px;
}

.mids svg {
  width: 16px;
  height: 16px;
  margin: 6px 2px 0 0;
}

.mids .car {
  margin: 12px 0 0 5px;
}

.newf { width: 48px; }
.newf svg { width: 24px; }

.pair {
  padding-top: 4px;
}

.pair > div {
  height: 22px;
  display: flex;
  align-items: center;
  gap: 2px;
}

.pair svg {
  width: 18px;
  height: 18px;
}

.props { width: 64px; }
.props svg { width: 24px; }
.props .car { margin-top: 4px; }

.g-sel .smalls {
  padding-left: 7px;
}

.address {
  height: 33px;
  display: flex;
  align-items: center;
  padding-top: 1px;
}

.address > svg {
  width: 14px;
  height: 14px;
}

.a1 { margin-left: 12px; }
.a2 { margin-left: 16px; }
.address .a3 { width: 6px; margin-left: 14px; color: #ccc; }
.a4 { margin-left: 10px; }

.path {
  width: 453px;
  height: 22px;
  margin-left: 6px;
  border: 1px solid #d9d9d9;
  display: flex;
  align-items: center;
  padding-left: 2px;
  color: #000;
}

.path span {
  padding-bottom: 2px;
  white-space: nowrap;
}

.path em {
  width: 23px;
  text-align: center;
  font: 15px/18px 'Open Sans', sans-serif;
  color: #666;
  padding-bottom: 4px;
}

.c1 {
  width: 75px;
  letter-spacing: 0.3px;
}

.c3 {
  width: 34px;
  letter-spacing: 0.2px;
}

.c4 {
  width: 59px;
  letter-spacing: 0.1px;
}

.laq {
  width: 16px;
  margin: -3px 0 0 5px;
  font-size: 15px;
  color: #555;
}

.path .drop {
  width: 12px;
  height: 12px;
  margin: 0 0 0 auto;
}

.refresh {
  width: 19px;
  height: 20px;
  border-left: 1px solid #d9d9d9;
  padding: 4px 3px;
}

.refresh svg {
  width: 12px;
  height: 12px;
}

.search {
  width: 202px;
  height: 22px;
  margin-left: 11px;
  border: 1px solid #d9d9d9;
  display: flex;
  align-items: center;
  justify-content: space-between;
  padding: 0 8px 0 8px;
  letter-spacing: 0.1px;
  color: #666;
}

.search span {
  padding-bottom: 2px;
}

.search svg {
  width: 12px;
  height: 12px;
}

.main {
  height: 389px;
  display: flex;
}

.tree {
  width: 139px;
  padding-top: 2px;
  overflow: hidden;
  letter-spacing: 0.2px;
  color: #000;
}

.tree > div {
  height: 24px;
  display: flex;
  line-height: 22px;
  white-space: nowrap;
}

.tree svg {
  width: 16px;
  height: 16px;
  margin: 4px 5px 0 0;
}

.l1 { padding-left: 40px; }
.l2 { padding-left: 48px; }
.l3 { padding-left: 56px; }
.l4 { padding-left: 64px; }

.pale {
  opacity: 0.5;
}

.sel {
  background: #d9d9d9;
}

.vscroll {
  width: 15px;
  margin: 2px 0 0 1px;
  height: 386px;
  background: #f0f0f0;
  display: flex;
  flex-direction: column;
  align-items: center;
}

.vscroll svg {
  width: 12px;
  height: 12px;
  margin-top: 3px;
}

.vthumb {
  width: 15px;
  height: 74px;
  margin-top: 151px;
  background: #cdcdcd;
}

.vscroll .dn {
  margin: auto 0 2px;
}

.files {
  flex: 1;
  padding-left: 5px;
  display: flex;
  flex-direction: column;
}

.cols {
  display: flex;
  height: 26px;
  margin: 2px 0 0 17px;
  line-height: 26px;
  letter-spacing: 0.1px;
  color: #4c5a76;
}

.cols .name { width: 255px; border-right: 1px solid #e5e5e5; }
.cols .date { width: 144px; padding-left: 6px; border-right: 1px solid #e5e5e5; position: relative; }
.cols .type { width: 120px; padding-left: 6px; border-right: 1px solid #e5e5e5; }
.cols .size { width: 80px; padding-left: 6px; border-right: 1px solid #e5e5e5; }

.cols svg {
  position: absolute;
  left: 68px;
  top: -2px;
  width: 8px;
  height: 8px;
  color: #999;
}

.ghead {
  height: 32px;
  display: flex;
  align-items: center;
  margin-right: 9px;
  padding-left: 5px;
  font-size: 14px;
  letter-spacing: 0.25px;
  color: #1e3287;
}

.ghead.first {
  height: 33px;
}

.ghead.long {
  letter-spacing: 0.45px;
}

.ghead svg {
  width: 12px;
  height: 12px;
  margin-right: 4px;
  color: #888;
}

.ghead hr {
  flex: 1;
  margin-left: 8px;
  border: none;
  border-top: 1px solid #dfe1e6;
}

.file {
  width: 598px;
  height: 21px;
  margin-left: 14px;
  padding-left: 4px;
  display: flex;
  line-height: 20px;
  letter-spacing: 0.12px;
  color: #666b72;
}

.file svg {
  width: 16px;
  height: 16px;
  margin-top: 2px;
}

.file .name { width: 244px; padding-left: 4px; color: #000; }
.file .date { width: 144px; }
.file .type { width: 120px; letter-spacing: 0.25px; }
.file .size { flex: 1; text-align: right; padding-right: 4px; }

.selected {
  height: 22px;
  background: #cce8ff;
  border: 1px solid #99d1ff;
  padding-left: 3px;
}

.selected svg {
  margin-top: 1px;
}

.selected .date {
  letter-spacing: 0;
}

.selected .size {
  padding-right: 3px;
}

.hover {
  background: #e5f3ff;
}

.hscroll {
  height: 15px;
  margin: auto 0 1px;
  background: #f0f0f0;
  display: flex;
  align-items: center;
}

.hscroll svg {
  width: 12px;
  height: 12px;
  margin: 0 3px 0 2px;
}

.hthumb {
  flex: 1;
  height: 15px;
  margin-right: 2px;
  background: #cdcdcd;
}

.status {
  flex: 1;
  display: flex;
  align-items: center;
  padding: 0 5px 0 14px;
  color: #2c3f77;
}

.status span {
  padding-bottom: 2px;
}

.s1 { width: 59px; }
.s2 { width: 85px; white-space: nowrap; letter-spacing: 0.1px; }
.s3 { margin-right: auto; }

.view {
  width: 22px;
  height: 23px;
  display: flex;
  align-items: center;
  justify-content: center;
}

.view svg {
  width: 14px;
  height: 12px;
}

.view.on {
  background: #c5e9fa;
  border: 1px solid #3a9cc2;
}

.view.on svg {
  width: 18px;
  height: 16px;
}

/* taskbar */
.taskbar {
  height: 40px;
  display: flex;
  background: linear-gradient(90deg, #00171f, #001521 50%, #020a1d 80%);
}

.start {
  width: 48px;
  display: flex;
  align-items: center;
  justify-content: center;
}

.start svg {
  width: 16px;
  height: 16px;
}

.tsearch {
  width: 288px;
  background: #f0f0f0;
  border: 1px solid #cfcfcf;
  display: flex;
  align-items: center;
  padding-left: 11px;
  font-size: 14px;
  color: #333;
}

.tsearch svg {
  width: 17px;
  height: 17px;
  margin-right: 11px;
}

.app {
  width: 49px;
  display: flex;
  align-items: center;
  justify-content: center;
}

.app svg {
  width: 24px;
  height: 24px;
}

.app.view-ic {
  width: 51px;
  padding-right: 3px;
}

.view-ic svg {
  width: 18px;
  height: 18px;
}

.edge {
  padding-right: 2px;
}

.active {
  width: 48px;
  background: #37474f;
  border-bottom: 2px solid #76b9ed;
}

.active svg {
  margin-top: 2px;
}

.run {
  background: linear-gradient(#76b9ed, #76b9ed) center bottom / 40px 2px no-repeat;
}

.tray {
  margin-left: auto;
  display: flex;
  align-items: center;
  color: #fff;
}

.tray svg {
  width: 18px;
  height: 18px;
  margin-right: 6px;
}

.tray .t1 {
  width: 12px;
  height: 12px;
  margin-right: 10px;
}

.clock {
  width: 62px;
  margin-left: -2px;
  text-align: center;
  line-height: 18px;
  letter-spacing: -0.1px;
}

.tray .note {
  margin: 0 19px 0 12px;
}

.tray i {
  width: 1px;
  height: 40px;
  background: #5a6270;
  margin-right: 4px;
}
```
